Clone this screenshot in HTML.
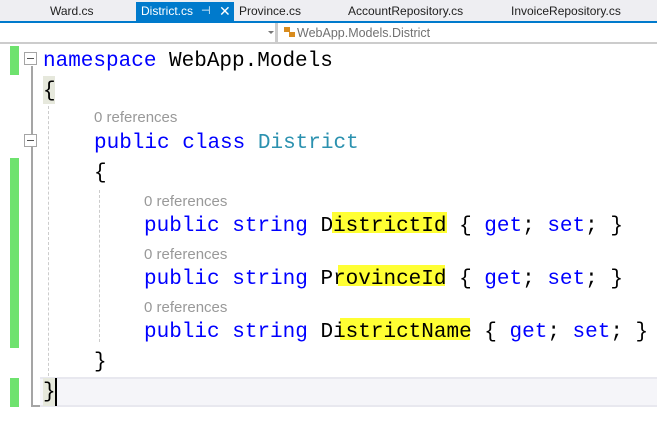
<!DOCTYPE html>
<html><head><meta charset="utf-8"><style>
body{margin:0;width:657px;height:426px;background:#fff;position:relative;overflow:hidden;font-family:"Liberation Sans",sans-serif}
.a{position:absolute}
.tabs{left:0;top:0;width:657px;height:21px;background:#eeeef2}
.tab{position:absolute;top:2px;height:19px;font-size:12px;line-height:19px;color:#1e1e1e}
.code{position:absolute;font-family:"Liberation Mono",monospace;font-size:21px;white-space:pre;color:#000;line-height:26px}
.k{color:#0000ff}.t{color:#2b91af}
.ref{position:absolute;font-size:15px;color:#999;line-height:18px}
.hl{position:absolute;background:#ffff33}
.g{position:absolute;left:10px;width:9px;background:#6ee26e}
.box{position:absolute;left:24px;width:11px;height:11px;border:1px solid #a5a5a5;background:#fff}
.box:after{content:"";position:absolute;left:2px;top:5px;width:7px;height:1px;background:#555}
.dash{position:absolute;width:0;border-left:1px dashed #ccc}
</style></head><body>
<div class="a tabs"></div>
<div class="tab" style="left:50px">Ward.cs</div>
<div class="a" style="left:136px;top:2px;width:98px;height:20px;background:#007acc"></div>
<div class="tab" style="left:141px;color:#fff">District.cs</div>
<div class="tab" style="left:201px;color:#fff;font-size:11px">⊣</div>
<div class="tab" style="left:219px;color:#fff;font-size:14px">✕</div>
<div class="tab" style="left:239px">Province.cs</div>
<div class="tab" style="left:348px">AccountRepository.cs</div>
<div class="tab" style="left:511px">InvoiceRepository.cs</div>
<div class="a" style="left:0;top:21px;width:657px;height:2px;background:#007acc"></div>
<div class="a" style="left:0;top:23px;width:657px;height:20px;background:#fff"></div>
<div class="a" style="left:0;top:42px;width:657px;height:2px;background:#ccc"></div>
<div class="a" style="left:275px;top:23px;width:3px;height:20px;background:#ccc"></div>
<div class="a" style="left:268px;top:31px;width:0;height:0;border-left:3px solid transparent;border-right:3px solid transparent;border-top:3px solid #777"></div>
<div class="a" style="left:284px;top:27px;width:6px;height:5px;background:#d98c1e"></div>
<div class="a" style="left:289px;top:32px;width:6px;height:5px;background:#d98c1e"></div>
<div class="a" style="left:297px;top:25px;font-size:12.5px;color:#717171;line-height:16px">WebApp.Models.District</div>

<div class="g" style="top:46px;height:29px"></div>
<div class="g" style="top:158px;height:190px"></div>
<div class="g" style="top:378px;height:29px"></div>
<div class="a" style="left:31px;top:66px;width:2px;height:341px;background:#a5a5a5"></div>
<div class="a" style="left:31px;top:405px;width:10px;height:2px;background:#a5a5a5"></div>
<div class="box" style="top:52px"></div>
<div class="box" style="top:134px"></div>
<div class="dash" style="left:48px;top:106px;height:270px"></div>
<div class="dash" style="left:99px;top:190px;height:152px"></div>
<div class="a" style="left:40px;top:377px;width:617px;height:30px;background:#f5f5f9;border-top:2px solid #e8e8ef;border-bottom:2px solid #e8e8ef;box-sizing:border-box"></div>
<div class="a" style="left:43px;top:76px;width:12px;height:28px;background:#e6e8dc"></div>
<div class="a" style="left:43px;top:378px;width:12px;height:28px;background:#e6e8dc"></div>
<div class="a" style="left:55px;top:378px;width:2px;height:28px;background:#000"></div>

<div class="hl" style="left:332px;top:212px;width:115px;height:21px"></div>
<div class="hl" style="left:338px;top:265px;width:107px;height:21px"></div>
<div class="hl" style="left:340px;top:318px;width:130px;height:22px"></div>

<div class="code" style="left:43px;top:49px"><span class="k">namespace</span> WebApp.Models</div>
<div class="code" style="left:43px;top:79px">{</div>
<div class="ref" style="left:94px;top:109px">0 references</div>
<div class="code" style="left:94px;top:131px"><span class="k">public</span> <span class="k">class</span> <span class="t">District</span></div>
<div class="code" style="left:94px;top:161px">{</div>
<div class="ref" style="left:144px;top:193px">0 references</div>
<div class="code" style="left:144px;top:214px"><span class="k">public</span> <span class="k">string</span> DistrictId { <span class="k">get</span>; <span class="k">set</span>; }</div>
<div class="ref" style="left:144px;top:246px">0 references</div>
<div class="code" style="left:144px;top:267px"><span class="k">public</span> <span class="k">string</span> ProvinceId { <span class="k">get</span>; <span class="k">set</span>; }</div>
<div class="ref" style="left:144px;top:299px">0 references</div>
<div class="code" style="left:144px;top:320px"><span class="k">public</span> <span class="k">string</span> DistrictName { <span class="k">get</span>; <span class="k">set</span>; }</div>
<div class="code" style="left:94px;top:350px">}</div>
<div class="code" style="left:43px;top:380px">}</div>
</body></html>
